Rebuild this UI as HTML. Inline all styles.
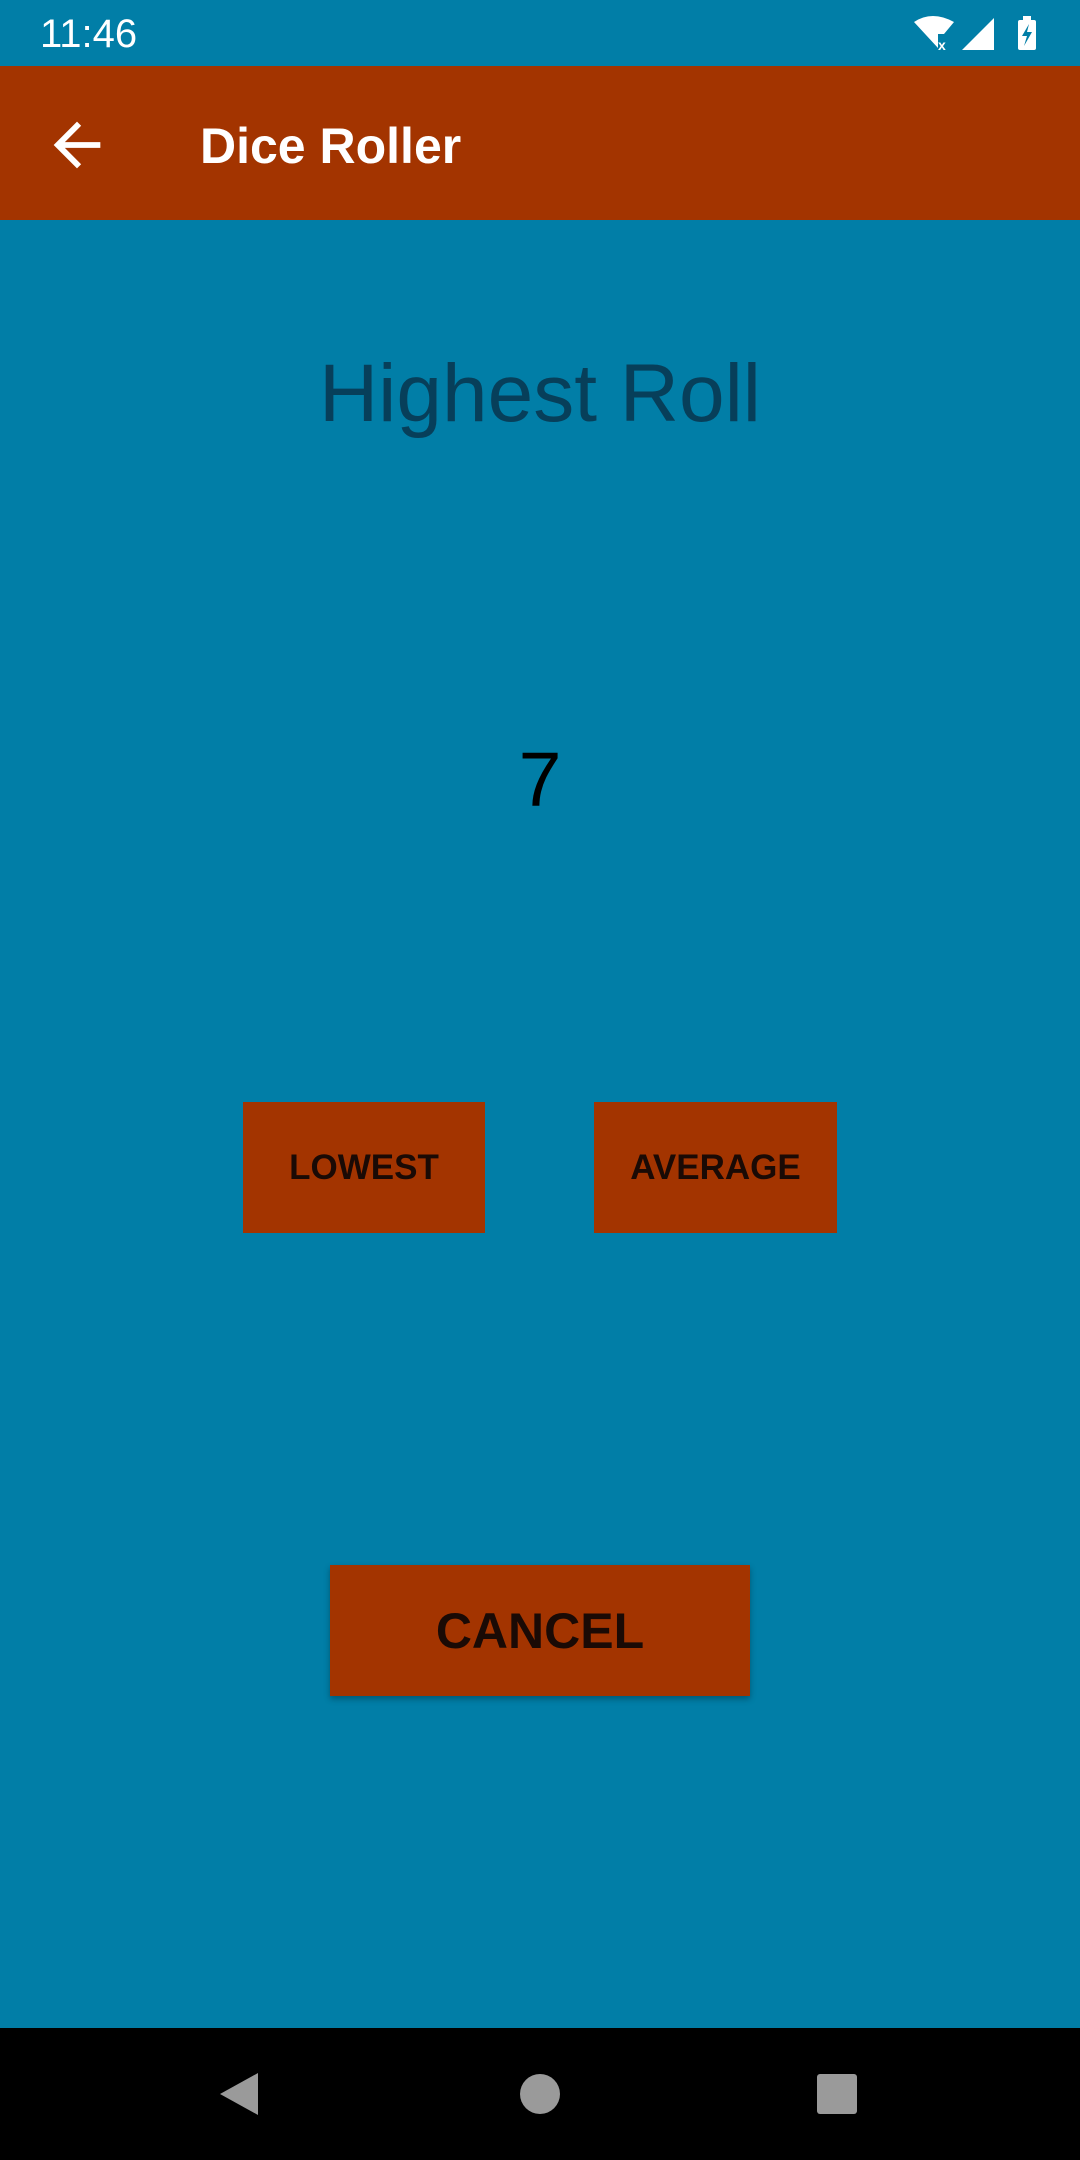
<!DOCTYPE html>
<html><head><meta charset="utf-8"><style>
*{margin:0;padding:0;box-sizing:border-box}
body{width:1080px;height:2160px;background:#017EA7;font-family:"Liberation Sans",sans-serif;position:relative;overflow:hidden}
.sb{position:absolute;left:0;top:0;width:1080px;height:66px;background:#017EA7;color:#fff}
.tb{position:absolute;left:0;top:66px;width:1080px;height:154px;background:#A33400}
.btn{position:absolute;background:#A33400;color:#1a0a05;font-weight:bold;display:flex;align-items:center;justify-content:center}
.nav{position:absolute;left:0;top:2028px;width:1080px;height:132px;background:#000}
</style></head><body>
<div class="sb">
<div style="position:absolute;left:40px;top:12px;font-size:40px;">11:46</div>
<svg style="position:absolute;left:912px;top:14px" width="136" height="40" viewBox="0 0 136 40">
<path d="M2 8 Q20 -4 42 8 L32 20 L26 20 L26 34 Z" fill="#fff"/>
<text x="26" y="36" font-size="14" fill="#fff" font-family="Liberation Sans" font-weight="bold">x</text>
<path d="M50 36 L82 4 L82 36 Z" fill="#fff"/>
<rect x="106" y="6" width="18" height="30" rx="2" fill="#fff"/>
<rect x="111" y="2" width="8" height="5" fill="#fff"/>
<path d="M117 10 L110 22 L115 22 L112 32 L120 18 L115 18 Z" fill="#017EA7"/>
</svg>
</div>
<div class="tb">
<svg style="position:absolute;left:42px;top:44px" width="70" height="70" viewBox="0 0 24 24"><path d="M20 11H7.83l5.59-5.59L12 4l-8 8 8 8 1.41-1.41L7.83 13H20v-2z" fill="#fff"/></svg>
<div style="position:absolute;left:200px;top:51px;font-size:50px;font-weight:bold;color:#fff">Dice Roller</div>
</div>
<div style="position:absolute;left:0;width:1080px;top:347px;text-align:center;font-size:82px;color:#073F5A">Highest Roll</div>
<div style="position:absolute;left:0;width:1080px;top:736px;text-align:center;font-size:77px;color:#000">7</div>
<div class="btn" style="left:243px;top:1102px;width:242px;height:131px;font-size:35px">LOWEST</div>
<div class="btn" style="left:594px;top:1102px;width:243px;height:131px;font-size:35px">AVERAGE</div>
<div class="btn" style="left:330px;top:1565px;width:420px;height:131px;font-size:50px;box-shadow:0 3px 6px rgba(0,0,0,0.3)">CANCEL</div>
<div class="nav">
<svg style="position:absolute;left:0;top:0" width="1080" height="132" viewBox="0 0 1080 132">
<path d="M258 45 L258 87 L220 66 Z" fill="#9a9a9a"/>
<circle cx="540" cy="66" r="20" fill="#9a9a9a"/>
<rect x="817" y="46" width="40" height="40" rx="3" fill="#9a9a9a"/>
</svg>
</div>
</body></html>
